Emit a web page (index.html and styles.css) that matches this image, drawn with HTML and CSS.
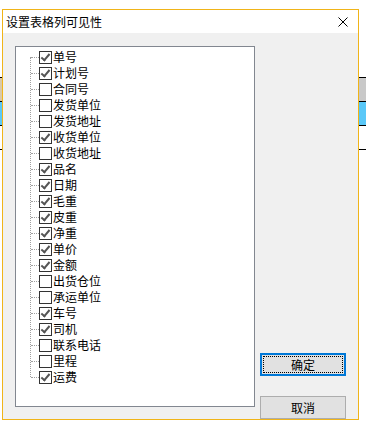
FILE: index.html
```html
<!DOCTYPE html>
<html>
<head>
<meta charset="utf-8">
<title>设置表格列可见性</title>
<link rel="stylesheet" href="styles.css">
</head>
<body>
	<div class="backdrop">
		<div class="bg-top"></div>
		<div class="bg-line"></div>
		<div class="bg-row bg-tan"></div>
		<div class="bg-line"></div>
		<div class="bg-row bg-cyan"></div>
		<div class="bg-line"></div>
		<div class="bg-gap"></div>
		<div class="bg-line"></div>
	</div>

	<div class="dialog">
		<div class="titlebar">
			<span class="title">设置表格列可见性</span>
			<svg class="close" width="10" height="10" viewBox="0 0 10 10">
				<path d="M0.5 0.5 L9.5 9.5 M9.5 0.5 L0.5 9.5" stroke="#000" stroke-width="1" fill="none"/>
			</svg>
		</div>
		<div class="content">
			<div class="tree">
				<ul class="items">
					<li class="on"><span class="box"></span>单号</li>
					<li class="on"><span class="box"></span>计划号</li>
					<li><span class="box"></span>合同号</li>
					<li><span class="box"></span>发货单位</li>
					<li><span class="box"></span>发货地址</li>
					<li class="on"><span class="box"></span>收货单位</li>
					<li><span class="box"></span>收货地址</li>
					<li class="on"><span class="box"></span>品名</li>
					<li class="on"><span class="box"></span>日期</li>
					<li class="on"><span class="box"></span>毛重</li>
					<li class="on"><span class="box"></span>皮重</li>
					<li class="on"><span class="box"></span>净重</li>
					<li class="on"><span class="box"></span>单价</li>
					<li class="on"><span class="box"></span>金额</li>
					<li><span class="box"></span>出货仓位</li>
					<li><span class="box"></span>承运单位</li>
					<li class="on"><span class="box"></span>车号</li>
					<li class="on"><span class="box"></span>司机</li>
					<li><span class="box"></span>联系电话</li>
					<li><span class="box"></span>里程</li>
					<li class="on last"><span class="box"></span>运费</li>
				</ul>
			</div>
			<div class="buttons">
				<button class="btn btn-default"><span>确定</span></button>
				<button class="btn">取消</button>
			</div>
		</div>
	</div>
</body>
</html>
```

FILE: styles.css
```css
html, body {
	margin: 0;
	padding: 0;
	background: #fff;
	width: 366px;
	height: 425px;
	overflow: hidden;
	font-family: "Noto Sans CJK SC", "Liberation Sans", sans-serif;
}

/* app window behind the dialog */
.backdrop {
	display: flex;
	flex-direction: column;
}

.bg-top {
	height: 77px;
}

.bg-line {
	height: 1px;
	background: #000;
}

.bg-row {
	height: 23px;
}

.bg-tan {
	background: linear-gradient(to right, #d8c8a8 0 10px, #c9c9c9 10px);
}

.bg-cyan {
	background: #5ac8f8;
}

.bg-gap {
	height: 23px;
}

.dialog {
	position: absolute;
	left: 2px;
	top: 9px;
	width: 355px;
	height: 409px;
	border: 1px solid #f0b418;
	background: #f0f0f0;
	display: flex;
	flex-direction: column;
}

.titlebar {
	height: 23px;
	background: #fff;
	display: flex;
	align-items: center;
	justify-content: space-between;
	padding: 0 10px 0 3px;
}

.title {
	font-size: 12px;
	color: #000;
	line-height: 16px;
}

.close {
	display: block;
	margin-right: 0;
}

.content {
	flex: 1;
	display: flex;
	padding: 13px 0 0 12px;
}

.tree {
	width: 238px;
	height: 359px;
	border: 1px solid #828790;
	background: #fff;
}

.items {
	list-style: none;
	margin: 2px 0 0 0;
	padding: 0;
	position: relative;
}

/* vertical dotted line of the tree */
.items::before {
	content: "";
	position: absolute;
	left: 14px;
	top: 8px;
	bottom: 8px;
	border-left: 1px dotted #a0a0a0;
}

.items li {
	height: 16px;
	display: flex;
	align-items: center;
	padding-left: 23px;
	font-size: 12px;
	line-height: 16px;
	color: #000;
	position: relative;
}

/* horizontal dotted branch */
.items li::before {
	content: "";
	position: absolute;
	left: 15px;
	top: 8px;
	width: 8px;
	border-top: 1px dotted #a0a0a0;
}

.box {
	width: 11px;
	height: 11px;
	border: 1px solid #333;
	background: #fff;
	margin-right: 1px;
	flex: none;
	position: relative;
}

.on .box::after {
	content: "";
	position: absolute;
	left: 3px;
	top: 0px;
	width: 3px;
	height: 7px;
	border-right: 2px solid #555;
	border-bottom: 2px solid #555;
	transform: rotate(40deg);
}

.buttons {
	display: flex;
	flex-direction: column;
	justify-content: flex-end;
	padding: 0 0 0 5px;
	margin-top: 294px;
}

.btn {
	width: 86px;
	height: 23px;
	background: #e1e1e1;
	border: 1px solid #adadad;
	font-family: "Noto Sans CJK SC", sans-serif;
	font-size: 12px;
	color: #000;
	padding: 0;
	margin: 0;
}

.btn + .btn {
	margin-top: 20px;
}

.btn-default {
	border: 2px solid #0078d7;
	padding: 1px;
}

.btn-default span {
	display: flex;
	align-items: center;
	justify-content: center;
	height: 100%;
	border: 1px dotted #000;
	box-sizing: border-box;
}
```
